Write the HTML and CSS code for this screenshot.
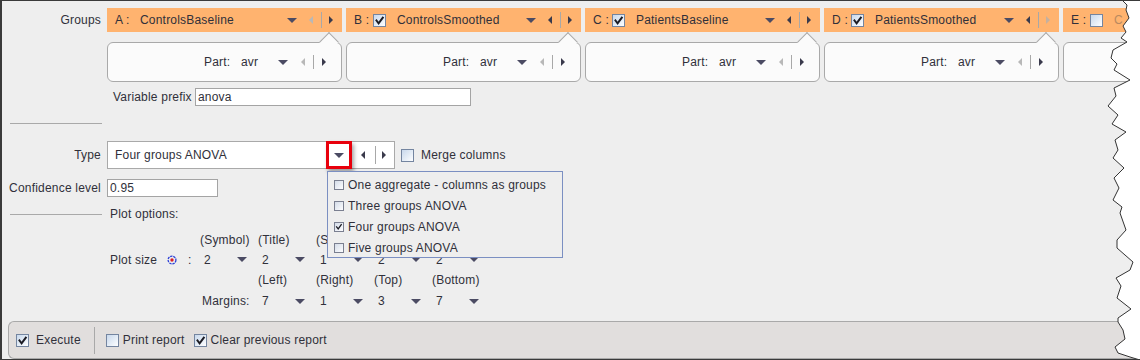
FILE: index.html
```html
<!DOCTYPE html>
<html lang="en">
<head>
  <meta charset="UTF-8" />
  <title>ANOVA</title>
  <link rel="stylesheet" href="styles.css">
</head>
<body>
  <div class="window">

    <div class="row row-groups">
      <span class="lbl">Groups</span>
      <div class="groups">
        <div class="group">
          <div class="tab">
            <span class="key key-a">A :</span>
            <span class="name">ControlsBaseline</span>
            <i class="dn"></i><i class="lt off"></i><i class="sep"></i><i class="rt"></i>
          </div>
          <div class="part">
            <span class="part-lbl">Part:</span><span class="part-val">avr</span>
            <i class="dn"></i><i class="lt off"></i><i class="sep"></i><i class="rt"></i>
          </div>
        </div>
        <div class="group">
          <div class="tab">
            <span class="key">B :</span>
            <span class="cb"><svg viewBox="0 0 11 11"><path d="M2.5 5.5 4.6 8.3 8.8 2.6"/></svg></span>
            <span class="name">ControlsSmoothed</span>
            <i class="dn"></i><i class="lt"></i><i class="sep"></i><i class="rt"></i>
          </div>
          <div class="part">
            <span class="part-lbl">Part:</span><span class="part-val">avr</span>
            <i class="dn"></i><i class="lt off"></i><i class="sep"></i><i class="rt"></i>
          </div>
        </div>
        <div class="group">
          <div class="tab">
            <span class="key">C :</span>
            <span class="cb"><svg viewBox="0 0 11 11"><path d="M2.5 5.5 4.6 8.3 8.8 2.6"/></svg></span>
            <span class="name">PatientsBaseline</span>
            <i class="dn"></i><i class="lt"></i><i class="sep"></i><i class="rt"></i>
          </div>
          <div class="part">
            <span class="part-lbl">Part:</span><span class="part-val">avr</span>
            <i class="dn"></i><i class="lt off"></i><i class="sep"></i><i class="rt"></i>
          </div>
        </div>
        <div class="group">
          <div class="tab">
            <span class="key">D :</span>
            <span class="cb"><svg viewBox="0 0 11 11"><path d="M2.5 5.5 4.6 8.3 8.8 2.6"/></svg></span>
            <span class="name">PatientsSmoothed</span>
            <i class="dn"></i><i class="lt"></i><i class="sep"></i><i class="rt off"></i>
          </div>
          <div class="part">
            <span class="part-lbl">Part:</span><span class="part-val">avr</span>
            <i class="dn"></i><i class="lt off"></i><i class="sep"></i><i class="rt"></i>
          </div>
        </div>
        <div class="group group-last">
          <div class="tab">
            <span class="key">E :</span>
            <span class="cb"></span>
            <span class="name name-off">C</span>
          </div>
          <div class="part"></div>
        </div>
      </div>
    </div>

    <div class="row row-prefix">
      <span class="lbl"></span>
      <span class="prefix-lbl">Variable prefix</span>
      <span class="input input-prefix">anova</span>
    </div>

    <div class="row row-rule">
      <span class="rule"></span>
    </div>

    <div class="row row-type">
      <span class="lbl">Type</span>
      <div class="combo">
        <span class="combo-text">Four groups ANOVA</span>
        <span class="hl"><i class="dn"></i></span>
        <i class="lt"></i><i class="sep"></i><i class="rt"></i>
        <div class="popup">
          <div class="item"><span class="cb-sm"></span>One aggregate - columns as groups</div>
          <div class="item"><span class="cb-sm"></span>Three groups ANOVA</div>
          <div class="item"><span class="cb-sm"><svg viewBox="0 0 10 10"><path d="M2 4.8 4 7.4 7.8 2.2"/></svg></span>Four groups ANOVA</div>
          <div class="item"><span class="cb-sm"></span>Five groups ANOVA</div>
        </div>
      </div>
      <span class="cb merge-cb"></span>
      <span class="merge-lbl">Merge columns</span>
    </div>

    <div class="row row-conf">
      <span class="lbl">Confidence level</span>
      <span class="input input-conf">0.95</span>
    </div>

    <div class="row row-plot">
      <span class="rule"></span>
      <span class="plot-title">Plot options:</span>
    </div>

    <div class="row">
      <span class="lbl"></span>
      <div class="plot-grid">
        <span></span>
        <span>(Symbol)</span><span>(Title)</span><span class="clip">(Size)</span><span></span><span></span>

        <span class="ps">
          <span class="ps-lbl">Plot size</span>
          <svg class="radio" viewBox="0 0 10 10"><circle cx="5" cy="5" r="3.9" fill="none" stroke="#2b3fd6" stroke-width="1.3" stroke-dasharray="2.4 0.8"/><circle cx="5" cy="5" r="1.7" fill="#d9202a"/></svg>
          <span class="colon">:</span>
        </span>
        <span class="mini"><span class="v">2</span><i class="dn"></i></span>
        <span class="mini"><span class="v">2</span><i class="dn"></i></span>
        <span class="mini"><span class="v">1</span><i class="dn"></i></span>
        <span class="mini"><span class="v">2</span><i class="dn"></i></span>
        <span class="mini"><span class="v">2</span><i class="dn"></i></span>

        <span></span><span></span>
        <span>(Left)</span><span>(Right)</span><span>(Top)</span><span>(Bottom)</span>

        <span></span>
        <span class="margins-lbl">Margins:</span>
        <span class="mini"><span class="v">7</span><i class="dn"></i></span>
        <span class="mini"><span class="v">1</span><i class="dn"></i></span>
        <span class="mini"><span class="v">3</span><i class="dn"></i></span>
        <span class="mini"><span class="v">7</span><i class="dn"></i></span>
      </div>
    </div>

    <div class="bar">
      <span class="cb"><svg viewBox="0 0 11 11"><path d="M2.5 5.5 4.6 8.3 8.8 2.6"/></svg></span>
      <span class="bar-txt bar-exec">Execute</span>
      <span class="vsep"></span>
      <span class="cb"></span>
      <span class="bar-txt">Print report</span>
      <span class="cb bar-gap"><svg viewBox="0 0 11 11"><path d="M2.5 5.5 4.6 8.3 8.8 2.6"/></svg></span>
      <span class="bar-txt">Clear previous report</span>
    </div>

    <svg class="tear" viewBox="0 0 34 360" width="34" height="360">
      <polygon fill="#fff" points="16,0 21,5 20,10 23,18 17,26 20,32 15,38 21,42 7,50 5,58 11,64 8,70 24,80 8,88 10,96 2,106 12,115 6,124 20,132 9,140 12,150 7,158 18,168 8,178 13,188 7,200 16,207 14,213 20,230 11,240 11,248 27,262 24,270 10,278 15,286 11,298 25,309 12,318 12,322 17,330 19,339 9,347 12,353 24,357 34,360 34,0"/>
      <polyline fill="none" stroke="#333" stroke-width="1" points="16,0 21,5 20,10 23,18 17,26 20,32 15,38 21,42 7,50 5,58 11,64 8,70 24,80 8,88 10,96 2,106 12,115 6,124 20,132 9,140 12,150 7,158 18,168 8,178 13,188 7,200 16,207 14,213 20,230 11,240 11,248 27,262 24,270 10,278 15,286 11,298 25,309 12,318 12,322 17,330 19,339 9,347 12,353 24,357 34,360"/>
    </svg>
  </div>
</body>
</html>
```

FILE: styles.css
```css
* {
  box-sizing: border-box;
}

body {
  margin: 0;
  width: 1140px;
  height: 360px;
  overflow: hidden;
  background: #fff;
  font-family: "Liberation Sans", Arial, sans-serif;
  font-size: 12px;
  letter-spacing: 0.2px;
  color: #30303a;
}

.window {
  position: relative;
  height: 360px;
  background: #eeeeee;
  border-top: 1px solid #3a3a3a;
  border-left: 2px solid #3a3a3a;
  border-bottom: 1px solid #3a3a3a;
  display: flex;
  flex-direction: column;
  overflow: hidden;
}

.row {
  display: flex;
  align-items: center;
  flex: none;
}

.lbl {
  flex: none;
  width: 93px;
  margin: 0 6px;
  text-align: right;
  white-space: nowrap;
}

/* arrows */
i {
  display: block;
  flex: none;
}

.dn {
  width: 0;
  height: 0;
  border-left: 5px solid transparent;
  border-right: 5px solid transparent;
  border-top: 5px solid #4b4b63;
}

.lt {
  width: 0;
  height: 0;
  border-top: 4px solid transparent;
  border-bottom: 4px solid transparent;
  border-right: 4px solid #3a3a4c;
}

.rt {
  width: 0;
  height: 0;
  border-top: 4px solid transparent;
  border-bottom: 4px solid transparent;
  border-left: 4px solid #3a3a4c;
}

.lt.off {
  border-right-color: #b8b8b8;
}

.rt.off {
  border-left-color: #c4b0a0;
}

.sep {
  width: 1px;
  height: 16px;
  background: #a8a8a8;
}

/* checkboxes */
.cb {
  flex: none;
  width: 13px;
  height: 13px;
  border: 1px solid #7485a0;
  background: linear-gradient(135deg, #c8d8ec, #fdfeff);
  display: flex;
}

.cb svg {
  width: 11px;
  height: 11px;
}

.cb path,
.cb-sm path {
  fill: none;
  stroke: #1c1c24;
  stroke-width: 2;
  stroke-linecap: square;
}

.cb-sm {
  flex: none;
  width: 10px;
  height: 10px;
  border: 1px solid #7a7f90;
  background: linear-gradient(135deg, #d4dce8, #fdfdff);
  margin-right: 4px;
  display: flex;
}

.cb-sm svg {
  width: 8px;
  height: 8px;
}

.cb-sm path {
  stroke-width: 1.6;
}

/* groups */
.row-groups {
  margin-top: 7px;
  align-items: flex-start;
}

.row-groups .lbl {
  line-height: 24px;
}

.groups {
  flex: 1;
  min-width: 0;
  display: flex;
  gap: 4px;
  overflow: hidden;
}

.group {
  flex: none;
  width: 235px;
}

.group-last {
  width: 80px;
}

.tab {
  height: 24px;
  background: #ffb36f;
  display: flex;
  align-items: center;
  padding: 0 9px 0 8px;
}

.key {
  flex: none;
  width: 19px;
  white-space: nowrap;
}

.key-a {
  width: 25px;
}

.tab .cb {
  margin-right: 11px;
}

.name {
  flex: 1;
  white-space: nowrap;
  overflow: hidden;
}

.name-off {
  color: #b98a60;
}

.tab .lt {
  margin-left: 12px;
}

.tab .sep {
  margin: 0 7px 0 8px;
}

.part {
  position: relative;
  margin-top: 10px;
  height: 40px;
  border: 1px solid #a9a9a9;
  border-radius: 6px;
  background: #fbfbfb;
  display: flex;
  align-items: center;
  justify-content: flex-end;
  padding-right: 15px;
}

.part::before {
  content: "";
  position: absolute;
  left: 214px;
  top: -8px;
  width: 13px;
  height: 13px;
  background: #fbfbfb;
  border-top: 1px solid #a9a9a9;
  border-left: 1px solid #a9a9a9;
  transform: rotate(45deg);
}

.group-last .part::before {
  display: none;
}

.part-lbl,
.part-val {
  width: 37px;
}

.part .lt {
  margin-left: 13px;
}

.part .sep {
  height: 14px;
  margin: 0 8px;
}

/* simple fields */
.input {
  display: block;
  height: 18px;
  line-height: 16px;
  border: 1px solid #a4a4a4;
  background: #fff;
  padding-left: 2px;
}

.row-prefix {
  margin-top: 6px;
  height: 18px;
}

.prefix-lbl {
  margin-left: 6px;
  width: 82px;
}

.input-prefix {
  width: 276px;
}

.row-rule {
  height: 35px;
}

.rule {
  flex: none;
  width: 92px;
  height: 1px;
  margin-left: 8px;
  background: #a9a9a9;
}

/* type combo */
.row-type {
  height: 28px;
}

.combo {
  position: relative;
  width: 288px;
  height: 28px;
  border: 1px solid #a9a9a9;
  background: #fff;
  display: flex;
  align-items: center;
  padding: 0 8px 0 7px;
}

.combo-text {
  flex: 1;
}

.hl {
  flex: none;
  width: 26px;
  height: 28px;
  margin: -1px 9px -1px 0;
  border: 3px solid #e8000c;
  background: #fff;
  display: flex;
  align-items: center;
  justify-content: center;
  box-shadow: 2px 3px 4px rgba(0, 0, 0, 0.35);
}

.combo .sep {
  height: 18px;
  margin: 0 6px 0 10px;
}

.popup {
  position: absolute;
  left: 219px;
  top: 29px;
  width: 236px;
  height: 87px;
  border: 1px solid #7b8fc2;
  background: #eeeeee;
  padding-top: 2px;
  z-index: 5;
}

.item {
  height: 21px;
  display: flex;
  align-items: center;
  padding-left: 6px;
  white-space: nowrap;
}

.merge-cb {
  margin-left: 6px;
}

.merge-lbl {
  margin-left: 7px;
}

.row-conf {
  margin-top: 10px;
  height: 18px;
}

.input-conf {
  width: 111px;
}

/* plot options */
.row-plot {
  margin-top: 8px;
  height: 18px;
}

.plot-title {
  margin-left: 8px;
}

.plot-grid {
  margin-top: 7px;
  margin-left: 3px;
  display: grid;
  grid-template-columns: 90px repeat(5, 58px);
  grid-template-rows: 20px 19px 22px 20px;
  align-items: center;
  white-space: nowrap;
}

.clip {
  overflow: hidden;
  width: 11px;
}

.ps {
  display: flex;
  align-items: center;
}

.ps-lbl {
  width: 57px;
}

.radio {
  width: 10px;
  height: 10px;
}

.colon {
  margin-left: 11px;
}

.margins-lbl {
  padding-left: 2px;
}

.mini {
  display: flex;
  align-items: center;
}

.mini .v {
  width: 37px;
  padding-left: 4px;
}

/* bottom bar */
.bar {
  margin-top: auto;
  margin-left: 6px;
  height: 38px;
  flex: none;
  border: 1px solid #a9a9a9;
  border-right: 0;
  border-radius: 6px 0 0 6px;
  background: #e1dedd;
  display: flex;
  align-items: center;
  padding-left: 7px;
}

.bar-txt {
  margin-left: 4px;
  white-space: nowrap;
}

.bar-exec {
  margin-left: 7px;
}

.vsep {
  width: 1px;
  height: 27px;
  background: #a9a9a9;
  margin: 0 11px 0 13px;
}

.bar-gap {
  margin-left: 9px;
}

.tear {
  position: absolute;
  top: -1px;
  right: 0;
  z-index: 10;
}
```
